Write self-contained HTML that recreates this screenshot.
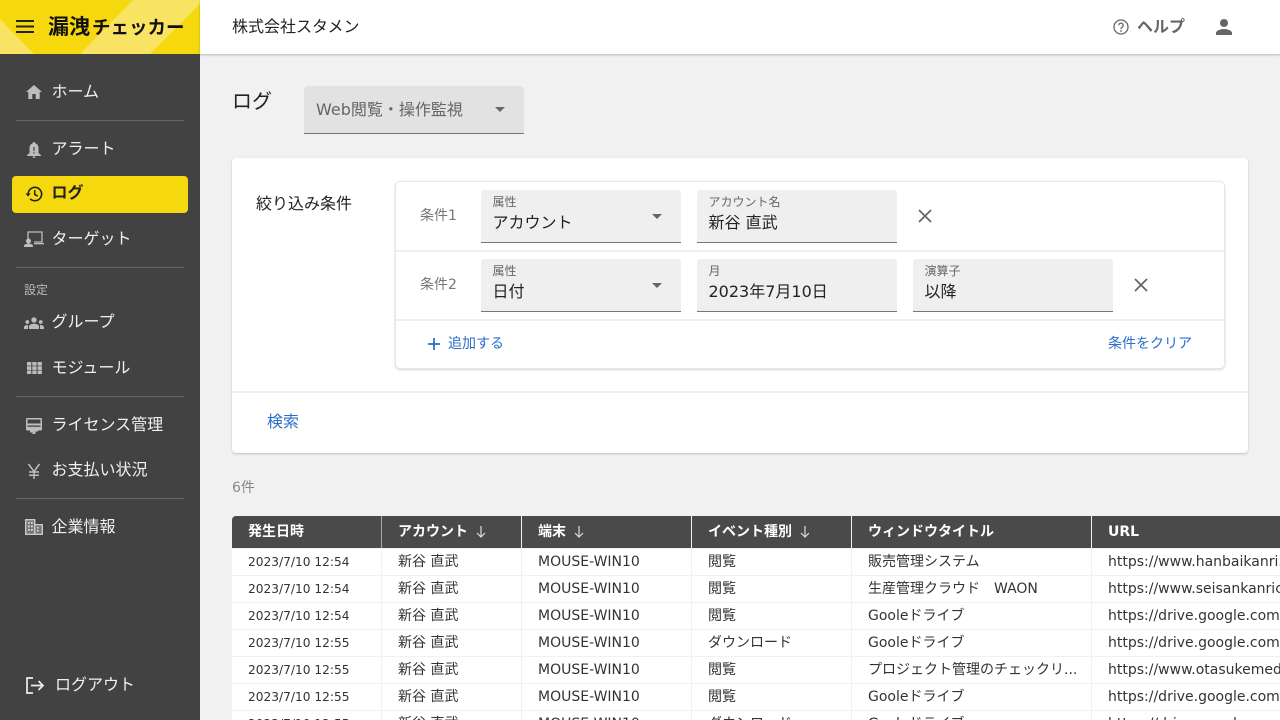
<!DOCTYPE html>
<html lang="ja"><head><meta charset="utf-8"><title>漏洩チェッカー</title>
<style>
*{box-sizing:border-box;margin:0;padding:0}
html,body{width:1280px;height:720px;overflow:hidden;background:#f1f1f1}
body{position:relative;font-family:"DejaVu Sans","Noto Sans CJK JP","Liberation Sans",sans-serif;color:#222}
.a{position:absolute;white-space:nowrap}
.side{position:absolute;left:0;top:54px;width:200px;height:666px;background:#424242}
.nav{position:absolute;left:51.500px;font-size:16px;line-height:24px;color:#f0f0f0;white-space:nowrap}
.hr{position:absolute;left:16px;width:168px;height:1px;background:#666}
.ic{position:absolute;overflow:visible}
.field{position:absolute;height:53px;background:#efefef;border-bottom:1px solid #777;border-radius:4px 4px 0 0}
.lab{position:absolute;left:11.500px;top:4px;font-size:12px;line-height:16px;color:#666;white-space:nowrap}
.val{position:absolute;left:11.500px;top:21px;font-size:16px;line-height:24px;color:#222;white-space:nowrap}
.tri{position:absolute;width:0;height:0;border-left:5px solid transparent;border-right:5px solid transparent;border-top:5px solid #666}
.th{position:absolute;top:516px;height:32px;background:#4a4a4a;color:#fff;font-size:14px;font-weight:700;line-height:32px;padding-left:16px;white-space:nowrap;overflow:hidden}
.td{position:absolute;height:26px;background:#fff;font-size:14px;line-height:26px;padding-left:16px;color:#333;white-space:nowrap;overflow:hidden}
.d{font-size:12.200px}
</style></head><body>

<div class="a" style="left:0;top:0;width:200px;height:54px;background:#f6d80e;overflow:hidden">
<svg width="200" height="54" style="position:absolute;left:0;top:0"><polygon points="0,19 34,54 0,54" fill="#f9e363"/><polygon points="133,0 80,54 150,54 200,4 200,0" fill="#f9e363"/></svg>
</div>
<svg class="ic" style="left:16px;top:19px" width="18" height="16"><path d="M0 2h18M0 7.500h18M0 13h18" stroke="#222" stroke-width="2" fill="none"/></svg>
<div class="a" style="left:48px;top:11px;font-size:21px;line-height:32px;font-weight:700;color:#111">漏洩<span style="font-size:18.500px;margin-left:2px">チェッカー</span></div>

<div class="a" style="left:200px;top:0;width:1080px;height:54px;background:#fff;box-shadow:0 1px 2px rgba(0,0,0,.25)"></div>
<div class="a" style="left:232px;top:15px;font-size:16px;line-height:24px;color:#222">株式会社スタメン</div>
<svg class="ic" style="left:1113px;top:19px" width="16" height="16" viewBox="0 0 16 16"><circle cx="8" cy="8" r="7" fill="none" stroke="#666" stroke-width="1.300"/><path d="M5.800 6.300a2.200 2.200 0 1 1 3.500 1.800c-.8.600-1.300 1-1.300 2" fill="none" stroke="#666" stroke-width="1.300"/><circle cx="8" cy="12" r=".9" fill="#666"/></svg>
<div class="a" style="left:1137px;top:15px;font-size:16px;line-height:24px;font-weight:700;color:#666">ヘルプ</div>
<svg class="ic" style="left:1216px;top:19px" width="16" height="16" viewBox="0 0 16 16"><circle cx="8" cy="4" r="4" fill="#666"/><path d="M0 16v-2c0-2.700 5.300-4 8-4s8 1.300 8 4v2z" fill="#666"/></svg>

<div class="side"></div>
<svg class="ic" style="left:26px;top:85px" width="16" height="14" viewBox="0 0 16 14"><path d="M8 0L0 7h2.300v7h4V9h3.400v5h4V7H16z" fill="#bdbdbd"/></svg>
<div class="nav" style="top:80px">ホーム</div>
<div class="hr" style="top:120px"></div>
<svg class="ic" style="left:27px;top:142px" width="14" height="16" viewBox="0 0 14 16"><path d="M7 0a1.200 1.200 0 0 1 1.200 1.300C10.500 2 11.500 4 11.500 6.500V11L14 13.300V14H0v-.7L2.500 11V6.500C2.500 4 3.500 2 5.800 1.300A1.200 1.200 0 0 1 7 0zM5.500 14.500h3a1.500 1.500 0 0 1-3 0z" fill="#bdbdbd"/><path d="M7 5v4M7 10.200v1.300" stroke="#424242" stroke-width="1.200"/></svg>
<div class="nav" style="top:137px">アラート</div>

<div class="a" style="left:12px;top:176px;width:176px;height:37px;background:#f6d80e;border-radius:4px"></div>
<svg class="ic" style="left:25px;top:185px" width="18" height="18" viewBox="0 0 18 18"><path d="M3.200 9a6.700 6.700 0 1 1 2 4.800" fill="none" stroke="#222" stroke-width="1.600"/><path d="M0.500 8.500h5.200L3.100 11.500z" fill="#222"/><path d="M9.700 5v4.400l3 1.800" fill="none" stroke="#222" stroke-width="1.500"/></svg>
<div class="nav" style="top:181px;color:#222;font-weight:700">ログ</div>

<svg class="ic" style="left:24px;top:231px" width="20" height="16" viewBox="0 0 20 16"><path d="M4 9V1h14v10h-8" fill="none" stroke="#bdbdbd" stroke-width="1.300"/><path d="M10 12h10v1.300H10z" fill="#bdbdbd"/><circle cx="4.500" cy="10" r="2.500" fill="#bdbdbd"/><path d="M0 16v-1.200c0-1.500 3-2.300 4.500-2.300s4.500.8 4.500 2.300V16z" fill="#bdbdbd"/></svg>
<div class="nav" style="top:227px">ターゲット</div>
<div class="hr" style="top:267px"></div>
<div class="a" style="left:24px;top:282px;font-size:12px;line-height:16px;color:#bbb">設定</div>
<svg class="ic" style="left:24px;top:317px" width="20" height="12" viewBox="0 0 20 12"><circle cx="10" cy="3" r="2.700" fill="#bdbdbd"/><circle cx="3.300" cy="5" r="1.900" fill="#bdbdbd"/><circle cx="16.700" cy="5" r="1.900" fill="#bdbdbd"/><path d="M5 12V9.500C5 7.500 8 6.700 10 6.700s5 .8 5 2.800V12zM0 12v-1.500C0 9 1.500 8 3.500 8L4 8.200V12zM20 12v-1.500C20 9 18.500 8 16.500 8L16 8.200V12z" fill="#bdbdbd"/></svg>
<div class="nav" style="top:310px">グループ</div>
<svg class="ic" style="left:27px;top:362px" width="15" height="12" viewBox="0 0 15 12" fill="#bdbdbd"><rect width="4.300" height="3.600"/><rect x="5.300" width="4.300" height="3.600"/><rect x="10.600" width="4.300" height="3.600"/><rect y="4.300" width="4.300" height="3.600"/><rect x="5.300" y="4.300" width="4.300" height="3.600"/><rect x="10.600" y="4.300" width="4.300" height="3.600"/><rect y="8.500" width="4.300" height="3.500"/><rect x="5.300" y="8.500" width="4.300" height="3.500"/><rect x="10.600" y="8.500" width="4.300" height="3.500"/></svg>
<div class="nav" style="top:356px">モジュール</div>
<div class="hr" style="top:396px"></div>
<svg class="ic" style="left:26px;top:418px" width="16" height="16" viewBox="0 0 16 16"><path d="M1 0h14a1 1 0 0 1 1 1v10.500a1 1 0 0 1-1 1h-3v1H9.500V16h-3v-1.500H4v-2H1a1 1 0 0 1-1-1V1a1 1 0 0 1 1-1z" fill="#bdbdbd"/><rect x="1.500" y="1.500" width="13" height="4" fill="#424242"/><rect x="1.500" y="7.500" width="13" height="1.300" fill="#424242"/></svg>
<div class="nav" style="top:413px">ライセンス管理</div>
<svg class="ic" style="left:27px;top:463px" width="14" height="16" viewBox="0 0 14 16"><path d="M1.500 1L7 8.500 12.500 1M7 8.500V16M2 9h10M2 12.300h10" fill="none" stroke="#bdbdbd" stroke-width="1.500"/></svg>
<div class="nav" style="top:458px">お支払い状況</div>
<div class="hr" style="top:498px"></div>
<svg class="ic" style="left:25px;top:519px" width="18" height="16" viewBox="0 0 18 16"><path d="M.7.700h9v14.600h-9zM9.700 5.700h7.600v9.600H9.700" fill="#777" stroke="#c8c8c8" stroke-width="1.400"/><path d="M3 3h1.700v1.800H3zM6 3h1.700v1.800H6zM3 6.500h1.700v1.800H3zM6 6.500h1.700v1.800H6zM3 10h1.700v1.800H3zM6 10h1.700v1.800H6zM12 8h1.700v1.500H12zM12 11h1.700v1.500H12z" fill="#ddd"/></svg>
<div class="nav" style="top:515px">企業情報</div>
<svg class="ic" style="left:26px;top:677px" width="19" height="17" viewBox="0 0 19 17"><path d="M7 1H1v15h6" fill="none" stroke="#eee" stroke-width="1.700"/><path d="M5 8.500h12M12.500 4l4.500 4.500-4.500 4.500" fill="none" stroke="#eee" stroke-width="1.700"/></svg>
<div class="nav" style="left:55px;top:673px">ログアウト</div>

<div class="a" style="left:232px;top:86px;font-size:20px;line-height:30px;color:#222">ログ</div>
<div class="a" style="left:304px;top:86px;width:220px;height:48px;background:#e2e2e2;border-bottom:1px solid #777;border-radius:4px 4px 0 0"></div>
<div class="a" style="left:316px;top:98px;font-size:16px;line-height:24px;color:#666">Web閲覧・操作監視</div>
<div class="tri" style="left:495px;top:107px"></div>

<div class="a" style="left:232px;top:158px;width:1016px;height:295px;background:#fff;border-radius:4px;box-shadow:0 1px 2px rgba(0,0,0,.2)"></div>
<div class="a" style="left:256px;top:192px;font-size:16px;line-height:24px;color:#222">絞り込み条件</div>
<div class="a" style="left:396px;top:182px;width:828px;height:186px;background:#fff;border-radius:4px;box-shadow:0 0 0 1px #e6e6e6,0 1px 3px rgba(0,0,0,.28)"></div>
<div class="a" style="left:396px;top:250px;width:828px;height:2px;background:#eee"></div>
<div class="a" style="left:396px;top:319px;width:828px;height:2px;background:#eee"></div>
<div class="a" style="left:232px;top:391px;width:1016px;height:2px;background:#eee"></div>

<div class="a" style="left:420px;top:206px;font-size:14px;line-height:20px;color:#777">条件1</div>
<div class="a" style="left:420px;top:275px;font-size:14px;line-height:20px;color:#777">条件2</div>

<div class="field" style="left:481px;top:190px;width:200px"><div class="lab">属性</div><div class="val">アカウント</div><div class="tri" style="left:171px;top:24px"></div></div>
<div class="field" style="left:697px;top:190px;width:200px"><div class="lab">アカウント名</div><div class="val">新谷 直武</div></div>
<svg class="ic" style="left:918px;top:209px" width="14" height="14"><path d="M1 1l12 12M13 1L1 13" stroke="#666" stroke-width="1.800"/></svg>
<div class="field" style="left:481px;top:259px;width:200px"><div class="lab">属性</div><div class="val">日付</div><div class="tri" style="left:171px;top:24px"></div></div>
<div class="field" style="left:697px;top:259px;width:200px"><div class="lab">月</div><div class="val">2023年7月10日</div></div>
<div class="field" style="left:913px;top:259px;width:200px"><div class="lab">演算子</div><div class="val">以降</div></div>
<svg class="ic" style="left:1134px;top:278px" width="14" height="14"><path d="M1 1l12 12M13 1L1 13" stroke="#666" stroke-width="1.800"/></svg>

<svg class="ic" style="left:428px;top:338px" width="12" height="12"><path d="M6 0v12M0 6h12" stroke="#2a6fc9" stroke-width="1.800"/></svg>
<div class="a" style="left:448px;top:334px;font-size:14px;line-height:20px;color:#2a6fc9">追加する</div>
<div class="a" style="left:1108px;top:334px;font-size:14px;line-height:20px;color:#2a6fc9">条件をクリア</div>
<div class="a" style="left:267px;top:410px;font-size:16px;line-height:24px;color:#2a6fc9">検索</div>
<div class="a" style="left:232px;top:478px;font-size:14px;line-height:20px;color:#888">6件</div>

<div class="a" style="left:381px;top:516px;width:1px;height:32px;background:#aaa"></div>
<div class="th" style="left:232px;width:149px;border-radius:4px 0 0 0">発生日時</div>
<div class="th" style="left:382px;width:139px">アカウント</div>
<div class="th" style="left:522px;width:169px">端末</div>
<div class="th" style="left:692px;width:159px">イベント種別</div>
<div class="th" style="left:852px;width:239px">ウィンドウタイトル</div>
<div class="th" style="left:1092px;width:188px">URL</div>
<svg class="ic" style="left:476px;top:525px" width="10" height="13"><path d="M5 1v11M1 8l4 4 4-4" fill="none" stroke="#ddd" stroke-width="1.200"/></svg>
<svg class="ic" style="left:574px;top:525px" width="10" height="13"><path d="M5 1v11M1 8l4 4 4-4" fill="none" stroke="#ddd" stroke-width="1.200"/></svg>
<svg class="ic" style="left:800px;top:525px" width="10" height="13"><path d="M5 1v11M1 8l4 4 4-4" fill="none" stroke="#ddd" stroke-width="1.200"/></svg>

<div class="td d" style="left:232px;top:549px;width:149px">2023/7/10 12:54</div><div class="td" style="left:382px;top:549px;width:139px">新谷 直武</div><div class="td" style="left:522px;top:549px;width:169px">MOUSE-WIN10</div><div class="td" style="left:692px;top:549px;width:159px">閲覧</div><div class="td" style="left:852px;top:549px;width:239px">販売管理システム</div><div class="td" style="left:1092px;top:549px;width:188px">https://www.hanbaikanri.jp</div>
<div class="td d" style="left:232px;top:576px;width:149px">2023/7/10 12:54</div><div class="td" style="left:382px;top:576px;width:139px">新谷 直武</div><div class="td" style="left:522px;top:576px;width:169px">MOUSE-WIN10</div><div class="td" style="left:692px;top:576px;width:159px">閲覧</div><div class="td" style="left:852px;top:576px;width:239px">生産管理クラウド　WAON</div><div class="td" style="left:1092px;top:576px;width:188px">https://www.seisankanricloud.jp</div>
<div class="td d" style="left:232px;top:603px;width:149px">2023/7/10 12:54</div><div class="td" style="left:382px;top:603px;width:139px">新谷 直武</div><div class="td" style="left:522px;top:603px;width:169px">MOUSE-WIN10</div><div class="td" style="left:692px;top:603px;width:159px">閲覧</div><div class="td" style="left:852px;top:603px;width:239px">Gooleドライブ</div><div class="td" style="left:1092px;top:603px;width:188px">https://drive.google.com/drive</div>
<div class="td d" style="left:232px;top:630px;width:149px">2023/7/10 12:55</div><div class="td" style="left:382px;top:630px;width:139px">新谷 直武</div><div class="td" style="left:522px;top:630px;width:169px">MOUSE-WIN10</div><div class="td" style="left:692px;top:630px;width:159px">ダウンロード</div><div class="td" style="left:852px;top:630px;width:239px">Gooleドライブ</div><div class="td" style="left:1092px;top:630px;width:188px">https://drive.google.com/drive</div>
<div class="td d" style="left:232px;top:657px;width:149px">2023/7/10 12:55</div><div class="td" style="left:382px;top:657px;width:139px">新谷 直武</div><div class="td" style="left:522px;top:657px;width:169px">MOUSE-WIN10</div><div class="td" style="left:692px;top:657px;width:159px">閲覧</div><div class="td" style="left:852px;top:657px;width:239px">プロジェクト管理のチェックリ...</div><div class="td" style="left:1092px;top:657px;width:188px">https://www.otasukemedia.jp</div>
<div class="td d" style="left:232px;top:684px;width:149px">2023/7/10 12:55</div><div class="td" style="left:382px;top:684px;width:139px">新谷 直武</div><div class="td" style="left:522px;top:684px;width:169px">MOUSE-WIN10</div><div class="td" style="left:692px;top:684px;width:159px">閲覧</div><div class="td" style="left:852px;top:684px;width:239px">Gooleドライブ</div><div class="td" style="left:1092px;top:684px;width:188px">https://drive.google.com/drive</div>
<div class="td d" style="left:232px;top:711px;width:149px">2023/7/10 12:55</div><div class="td" style="left:382px;top:711px;width:139px">新谷 直武</div><div class="td" style="left:522px;top:711px;width:169px">MOUSE-WIN10</div><div class="td" style="left:692px;top:711px;width:159px">ダウンロード</div><div class="td" style="left:852px;top:711px;width:239px">Gooleドライブ</div><div class="td" style="left:1092px;top:711px;width:188px">https://drive.google.com/drive</div>
</body></html>
